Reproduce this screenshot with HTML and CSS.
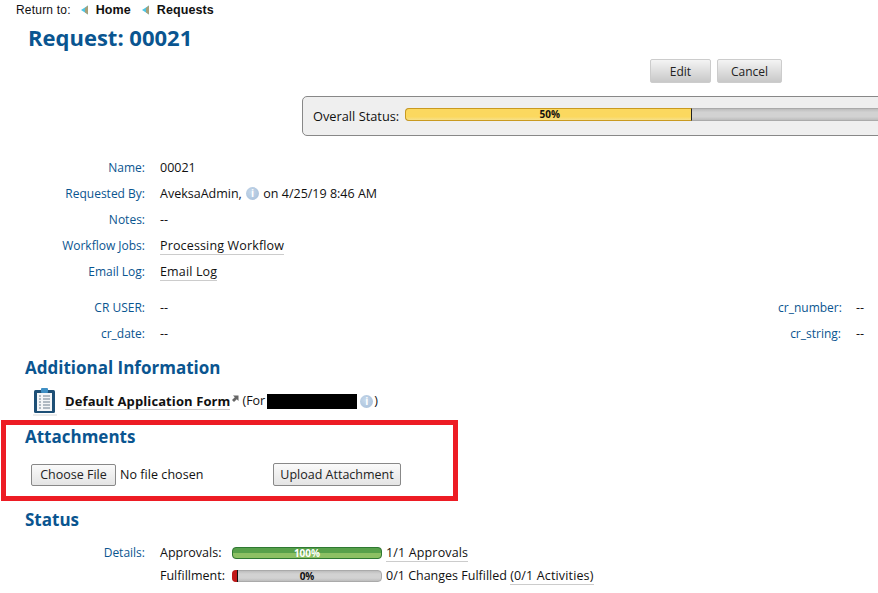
FILE: index.html
```html
<!DOCTYPE html>
<html lang="en">
<head>
    <meta charset="UTF-8">
    <title>Request: 00021</title>
    <link rel="stylesheet" href="styles.css">
</head>
<body>
    <div class="breadcrumb">
        <span class="return">Return to:</span>
        <svg class="crumb-arrow" width="9" height="10" viewBox="0 0 9 10"><path d="M8 0.5V9.5L1 5Z" fill="#4cc6e4"/><path d="M8 0.5V9.5L5 7.5V3Z" fill="#a8a078"/></svg>
        <a class="crumb">Home</a>
        <svg class="crumb-arrow" width="9" height="10" viewBox="0 0 9 10"><path d="M8 0.5V9.5L1 5Z" fill="#4cc6e4"/><path d="M8 0.5V9.5L5 7.5V3Z" fill="#a8a078"/></svg>
        <a class="crumb">Requests</a>
    </div>

    <h1 class="title">Request: 00021</h1>

    <div class="actions">
        <button class="btn btn-edit">Edit</button>
        <button class="btn btn-cancel">Cancel</button>
    </div>

    <div class="overall">
        <span class="overall-label">Overall Status:</span>
        <div class="bar bar-overall">
            <div class="fill fill-yellow bar-half"></div>
            <span class="bar-text">50%</span>
        </div>
    </div>

    <div class="fields">
        <div class="lbl">Name:</div>
        <div class="val">00021</div>
        <div class="lbl">Requested By:</div>
        <div class="val">AveksaAdmin, <span class="info">i</span> on 4/25/19 8:46 AM</div>
        <div class="lbl">Notes:</div>
        <div class="val">--</div>
        <div class="lbl">Workflow Jobs:</div>
        <div class="val"><a class="link">Processing Workflow</a></div>
        <div class="lbl">Email Log:</div>
        <div class="val"><a class="link">Email Log</a></div>
    </div>

    <div class="custom">
        <div class="lbl">CR USER:</div>
        <div class="val">--</div>
        <div class="lbl lbl-right">cr_number:</div>
        <div class="val">--</div>
        <div class="lbl">cr_date:</div>
        <div class="val">--</div>
        <div class="lbl lbl-right">cr_string:</div>
        <div class="val">--</div>
    </div>

    <h2 class="section-title info-title">Additional Information</h2>
    <div class="form-row">
        <svg class="form-icon" width="24" height="29" viewBox="0 0 24 29">
            <rect x="1" y="3" width="21" height="23" rx="1.5" fill="#1d4f76"/>
            <rect x="4" y="6" width="15" height="18" fill="#f4f6f8"/>
            <rect x="8" y="1" width="7" height="5" rx="1" fill="#3f8fc4"/>
            <path d="M6 9h2M10 9h7M6 12h2M10 12h7M6 15h2M10 15h7M6 18h2M10 18h7M6 21h2M10 21h7" stroke="#6d7f8e" stroke-width="1"/>
            <path d="M0 28h24" stroke="#d8d8d8" stroke-width="1"/>
        </svg>
        <a class="link form-link">Default Application Form</a>
        <svg class="ext" width="7" height="7" viewBox="0 0 7 7"><path d="M1 0.5H6.5V6L4.8 4.2L2 7L0 5L2.8 2.2Z" fill="#666"/></svg>
        <span class="for">(For</span>
        <span class="redacted"></span>
        <span class="info info-form">i</span><span class="for">)</span>
    </div>

    <section class="attachments">
        <h2 class="section-title attach-title">Attachments</h2>
        <div class="upload-row">
            <button class="file-btn choose-btn">Choose File</button>
            <span class="no-file">No file chosen</span>
            <button class="file-btn upload-btn">Upload Attachment</button>
        </div>
    </section>

    <h2 class="section-title status-title">Status</h2>
    <div class="status">
        <div class="lbl">Details:</div>
        <div class="val">Approvals:</div>
        <div class="bar bar-small bar-done">
            <div class="fill fill-green"></div>
            <span class="bar-text bar-text-light">100%</span>
        </div>
        <div class="val"><a class="link">1/1 Approvals</a></div>
        <div></div>
        <div class="val">Fulfillment:</div>
        <div class="bar bar-small">
            <div class="fill fill-red"></div>
            <span class="bar-text">0%</span>
        </div>
        <div class="val">0/1 Changes Fulfilled <a class="link">(0/1 Activities)</a></div>
    </div>
</body>
</html>
```

FILE: styles.css
```css
* {
    margin: 0;
    padding: 0;
    box-sizing: border-box;
}

html, body {
    overflow: hidden;
}

body {
    width: 878px;
    height: 593px;
    background: #fff;
    color: #111;
    font-family: "Open Sans", "Noto Sans", sans-serif;
    font-size: 12px;
    line-height: 16px;
}

.breadcrumb {
    display: flex;
    align-items: center;
    height: 20px;
    padding-left: 16px;
    font-family: "Liberation Sans", sans-serif;
    font-size: 12px;
}

.return {
    margin-right: 9px;
    letter-spacing: 0.2px;
}

.crumb-arrow {
    margin-right: 7px;
}

.crumb {
    margin-right: 10px;
    font-size: 12.5px;
    font-weight: bold;
    letter-spacing: 0.1px;
}

.title {
    margin: 4px 0 0 28px;
    height: 26px;
    color: #0a5590;
    font-size: 22px;
    line-height: 26px;
    font-weight: bold;
}

.actions {
    display: flex;
    gap: 6px;
    margin: 9px 0 0 650px;
}

.btn {
    height: 24px;
    border: 1px solid #ccc;
    border-radius: 2px;
    background: linear-gradient(#f4f4f4, #c8c8c8);
    color: #222;
    font-family: inherit;
    font-size: 12px;
}

.btn-edit {
    width: 61px;
}

.btn-cancel {
    width: 65px;
}

.overall {
    display: flex;
    align-items: center;
    width: 620px;
    height: 40px;
    margin: 13px 0 0 302px;
    padding-left: 10px;
    border: 1px solid #888;
    border-radius: 5px;
    background: #efefef;
    font-size: 12.8px;
}

.overall-label {
    width: 93px;
    white-space: nowrap;
}

.bar {
    position: relative;
    height: 13px;
    border: 1px solid #aaa;
    border-radius: 4px;
    background: linear-gradient(#bdbdbd, #d2d2d2 30%, #d2d2d2 70%, #bdbdbd);
}

.bar-overall {
    width: 520px;
    margin-top: -4px;
}

.bar-small {
    width: 150px;
    height: 12px;
    margin-top: 2px;
}

.fill {
    position: absolute;
    top: -1px;
    bottom: -1px;
    left: -1px;
    border-radius: 4px 0 0 4px;
}

.fill-yellow {
    border: 1px solid #c99a20;
    border-right: 1px solid #222;
    background: linear-gradient(#fbd85f, #fbd85f 70%, #f6e08a);
}

.bar-half {
    width: 287px;
}

.fill-green {
    right: -1px;
    border: 1px solid #2f7a32;
    border-radius: 4px;
    background: linear-gradient(#57a04a, #57a04a 50%, #8cc063 51%);
}

.fill-red {
    width: 6px;
    border-right: 1px solid #111;
    background: #c01818;
}

.bar-text {
    position: absolute;
    top: 0;
    left: 0;
    width: 100%;
    color: #111;
    font-size: 10px;
    font-weight: bold;
    line-height: 11px;
    text-align: center;
}

.bar-overall .bar-text {
    left: 0;
    width: 287px;
}

.bar-text-light {
    color: #fff;
}

.fields,
.custom,
.status {
    display: grid;
    column-gap: 15px;
}

.fields {
    grid-template-columns: 145px 1fr;
    grid-auto-rows: 26px;
    margin-top: 24px;
}

.lbl {
    color: #0a5590;
    text-align: right;
}

.val {
    font-size: 12.5px;
    white-space: nowrap;
}

.link {
    display: inline-block;
    height: 17px;
    border-bottom: 1px solid #ccc;
    letter-spacing: 0.15px;
}

.info {
    display: inline-block;
    width: 13px;
    height: 13px;
    margin: 0 1px;
    border-radius: 50%;
    background: radial-gradient(circle at 40% 40%, #c6d8ea, #a3bcd8);
    color: #fff;
    font-size: 10px;
    font-weight: bold;
    line-height: 13px;
    text-align: center;
    vertical-align: 1px;
}

.custom {
    grid-template-columns: 145px 1fr 63px 8px;
    grid-auto-rows: 26px;
    margin-top: 10px;
    padding-right: 14px;
}

.lbl-right {
    grid-column: 3;
}

.section-title {
    margin-left: 25px;
    color: #0a5590;
    font-size: 17px;
    line-height: 24px;
    font-weight: bold;
}

.info-title {
    margin-top: 4px;
}

.form-row {
    display: flex;
    align-items: center;
    height: 30px;
    margin: 6px 0 0 33px;
    font-size: 12.5px;
}

.form-icon {
    margin-right: 8px;
}

.form-link {
    color: #111;
    font-size: 13px;
    font-weight: bold;
    letter-spacing: 0.1px;
}

.ext {
    margin: -6px 3px 0 2px;
}

.redacted {
    width: 90px;
    height: 15px;
    margin-left: 2px;
    background: #000;
}

.info-form {
    margin: 0 1px 0 3px;
}

.attachments {
    width: 457px;
    height: 81px;
    margin: 4px 0 0 1px;
    border: 5px solid #ed1c24;
}

.section-title.attach-title {
    margin: 0 0 0 19px;
}

.upload-row {
    display: flex;
    align-items: center;
    margin: 14px 0 0 25px;
    font-size: 12.5px;
}

.file-btn {
    height: 22px;
    border: 1px solid #888;
    border-radius: 2px;
    background: linear-gradient(#fafafa, #e4e4e4);
    color: #222;
    font-family: inherit;
    font-size: 12.5px;
}

.choose-btn {
    width: 85px;
}

.upload-btn {
    width: 128px;
    height: 23px;
}

.no-file {
    width: 153px;
    margin-left: 4px;
    letter-spacing: 0.05px;
}

.status-title {
    margin-top: 7px;
}

.status {
    grid-template-columns: 156px 68px 150px 1fr;
    grid-auto-rows: 23px;
    column-gap: 4px;
    margin-top: 13px;
}

.status .lbl {
    padding-right: 11px;
}
```
